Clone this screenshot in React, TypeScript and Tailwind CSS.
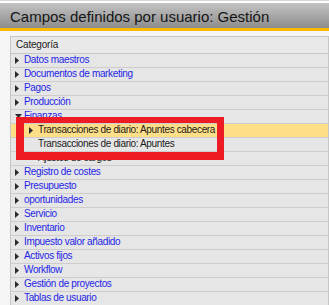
import React from 'react'

type Row = {
  label: string
  level: 0 | 1
  arrow: 'right' | 'down' | 'none'
  selected?: boolean
}

const rows: Row[] = [
  { label: 'Datos maestros', level: 0, arrow: 'right' },
  { label: 'Documentos de marketing', level: 0, arrow: 'right' },
  { label: 'Pagos', level: 0, arrow: 'right' },
  { label: 'Producción', level: 0, arrow: 'right' },
  { label: 'Finanzas', level: 0, arrow: 'down' },
  { label: 'Transacciones de diario: Apuntes cabecera', level: 1, arrow: 'right', selected: true },
  { label: 'Transacciones de diario: Apuntes', level: 1, arrow: 'none' },
  { label: 'Ajustes de cargos', level: 1, arrow: 'none' },
  { label: 'Registro de costes', level: 0, arrow: 'right' },
  { label: 'Presupuesto', level: 0, arrow: 'right' },
  { label: 'oportunidades', level: 0, arrow: 'right' },
  { label: 'Servicio', level: 0, arrow: 'right' },
  { label: 'Inventario', level: 0, arrow: 'right' },
  { label: 'Impuesto valor añadido', level: 0, arrow: 'right' },
  { label: 'Activos fijos', level: 0, arrow: 'right' },
  { label: 'Workflow', level: 0, arrow: 'right' },
  { label: 'Gestión de proyectos', level: 0, arrow: 'right' },
  { label: 'Tablas de usuario', level: 0, arrow: 'right' },
]

function Arrow({ dir }: { dir: 'right' | 'down' }) {
  if (dir === 'down') {
    return (
      <svg width="7" height="4" viewBox="0 0 7 4" className="block">
        <path d="M0 0 L7 0 L3.5 4 Z" fill="#2a2a2a" />
      </svg>
    )
  }
  return (
    <svg width="4" height="7" viewBox="0 0 4 7" className="block">
      <path d="M0 0 L4 3.5 L0 7 Z" fill="#2a2a2a" />
    </svg>
  )
}

function TreeRow({ row }: { row: Row }) {
  const indent = row.level === 0 ? 'pl-[4px]' : 'pl-[18px]'
  return (
    <div
      className={`flex h-[14px] items-center border-b border-[#cdcdcd] pb-[2px] ${indent} ${
        row.selected ? 'bg-[#fedf88]' : 'bg-[#e6e6e6]'
      }`}
    >
      <div className="flex w-[9px] shrink-0 items-center justify-start pt-[1px]">
        {row.arrow !== 'none' && <Arrow dir={row.arrow} />}
      </div>
      <span
        className={`whitespace-nowrap text-[10px] leading-none tracking-[-0.35px] ${
          row.level === 0 ? 'text-[#1f1fe6]' : 'text-[#1a1a1a]'
        }`}
      >
        {row.label}
      </span>
    </div>
  )
}

export default function App() {
  return (
    <div className="relative h-[305px] w-[329px] overflow-hidden bg-[#f5f5f5] font-['Liberation_Sans',Arial,sans-serif]">
      <div className="h-[1px] bg-[#d6d6d6]" />
      <div className="h-[2px] bg-white" />
      {/* barra de título */}
      <div className="flex h-[25px] items-center bg-gradient-to-b from-[#c4c4c4] to-[#8c8c8c] pl-[10px]">
        <h1 className="whitespace-nowrap pt-[1px] text-[15px] leading-none text-[#151515]">
          Campos definidos por usuario: Gestión
        </h1>
      </div>
      <div className="h-[3px] bg-[#fbb900]" />

      {/* lista de categorías */}
      <div className="pl-[10px] pt-[5px]">
        <div className="border-l border-r border-t border-[#c6c6c6]">
          <div className="flex h-[17px] items-center border-b border-[#c6c6c6] bg-[#e9e9e9] pl-[5px]">
            <span className="text-[10px] leading-none tracking-[-0.2px] text-[#222]">Categoría</span>
          </div>
          {rows.map((r) => (
            <TreeRow key={r.label} row={r} />
          ))}
        </div>
      </div>

      {/* marco rojo de anotación */}
      <div className="absolute left-[16px] top-[117px] h-[43px] w-[208px] border-b-[8px] border-l-[8px] border-r-[7px] border-t-[6px] border-[#ed1c24]" />
    </div>
  )
}
